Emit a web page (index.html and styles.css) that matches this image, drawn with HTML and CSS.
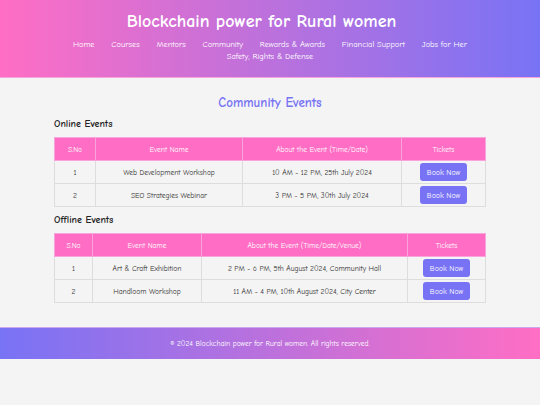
FILE: index.html
```html
<!DOCTYPE html>
<html lang="en">
<head>
  <meta charset="UTF-8">
  <title>Community Events</title>
  <link rel="stylesheet" href="styles.css">
</head>
<body>
  <header class="site-header">
    <h1>Blockchain power for Rural women</h1>
    <nav class="nav">
      <a href="#">Home</a>
      <a href="#">Courses</a>
      <a href="#">Mentors</a>
      <a href="#">Community</a>
      <a href="#">Rewards &amp; Awards</a>
      <a href="#">Financial Support</a>
      <a href="#">Jobs for Her</a>
      <a href="#">Safety, Rights &amp; Defense</a>
    </nav>
  </header>

  <main class="events">
    <h2>Community Events</h2>

    <h3>Online Events</h3>
    <table class="event-table online">
      <thead>
        <tr>
          <th>S.No</th>
          <th>Event Name</th>
          <th>About the Event (Time/Date)</th>
          <th>Tickets</th>
        </tr>
      </thead>
      <tbody>
        <tr>
          <td>1</td>
          <td>Web Development Workshop</td>
          <td>10 AM - 12 PM, 25th July 2024</td>
          <td><button class="book">Book Now</button></td>
        </tr>
        <tr>
          <td>2</td>
          <td>SEO Strategies Webinar</td>
          <td>3 PM - 5 PM, 30th July 2024</td>
          <td><button class="book">Book Now</button></td>
        </tr>
      </tbody>
    </table>

    <h3>Offline Events</h3>
    <table class="event-table offline">
      <thead>
        <tr>
          <th>S.No</th>
          <th>Event Name</th>
          <th>About the Event (Time/Date/Venue)</th>
          <th>Tickets</th>
        </tr>
      </thead>
      <tbody>
        <tr>
          <td>1</td>
          <td>Art &amp; Craft Exhibition</td>
          <td>2 PM - 6 PM, 5th August 2024, Community Hall</td>
          <td><button class="book">Book Now</button></td>
        </tr>
        <tr>
          <td>2</td>
          <td>Handloom Workshop</td>
          <td>11 AM - 4 PM, 10th August 2024, City Center</td>
          <td><button class="book">Book Now</button></td>
        </tr>
      </tbody>
    </table>
  </main>

  <footer class="site-footer">
    <p>&copy; 2024 Blockchain power for Rural women. All rights reserved.</p>
  </footer>
</body>
</html>
```

FILE: styles.css
```css
body {
  margin: 0;
  font-family: 'Comic Sans MS', 'Comic Neue', 'Lato', sans-serif;
  background: #f4f4f4;
  color: #333;
}

.site-header {
  background: linear-gradient(to right, #ff6ec4, #7873f5);
  color: white;
  text-align: center;
  padding: 11px 0 15px;
  border-bottom: 1px solid #f7a6dc;
}

.site-header h1 {
  margin: 0 0 5px;
  padding-right: 17px;
  font-size: 18px;
  line-height: 22px;
}

.nav {
  max-width: 430px;
  margin: 0 auto;
  font-size: 8.4px;
  line-height: 12px;
}

.nav a {
  color: white;
  text-decoration: none;
  margin: 0 7px;
}

.events {
  width: 80%;
  margin: 0 auto;
  padding: 17px 0 18px;
}

.events h2 {
  margin: 0 0 6px;
  text-align: center;
  color: #7873f5;
  font-size: 13px;
  line-height: 16px;
}

.events h3 {
  margin: 0 0 6px;
  font-size: 10px;
  line-height: 14px;
  color: #222;
}

.event-table {
  width: 100%;
  table-layout: fixed;
  border-collapse: collapse;
  margin-bottom: 6px;
  font-size: 7.5px;
}

.event-table th,
.event-table td {
  box-sizing: border-box;
  border: 1px solid #ddd;
  text-align: center;
  padding: 0 2px;
}

.event-table th {
  background: #ff6ec4;
  color: white;
  font-weight: normal;
  height: 23px;
  border-color: #f9a3dc;
}

.event-table td {
  height: 23px;
}

.book {
  background: #7873f5;
  color: white;
  border: none;
  border-radius: 3px;
  font-family: inherit;
  font-size: 7.8px;
  width: 47px;
  height: 18px;
  padding: 0;
  cursor: pointer;
}

.online th:nth-child(1) { width: 41px; }
.online th:nth-child(2) { width: 147px; }
.online th:nth-child(3) { width: 159px; }

.offline th:nth-child(1) { width: 38px; }
.offline th:nth-child(2) { width: 109px; }
.offline th:nth-child(3) { width: 206px; }

.site-footer {
  background: linear-gradient(to right, #7873f5, #ff6ec4);
  border-top: 1px solid #c9a8ef;
  color: white;
  text-align: center;
  padding: 11px 0;
}

.site-footer p {
  margin: 0;
  font-size: 7.5px;
  line-height: 9px;
}
```
